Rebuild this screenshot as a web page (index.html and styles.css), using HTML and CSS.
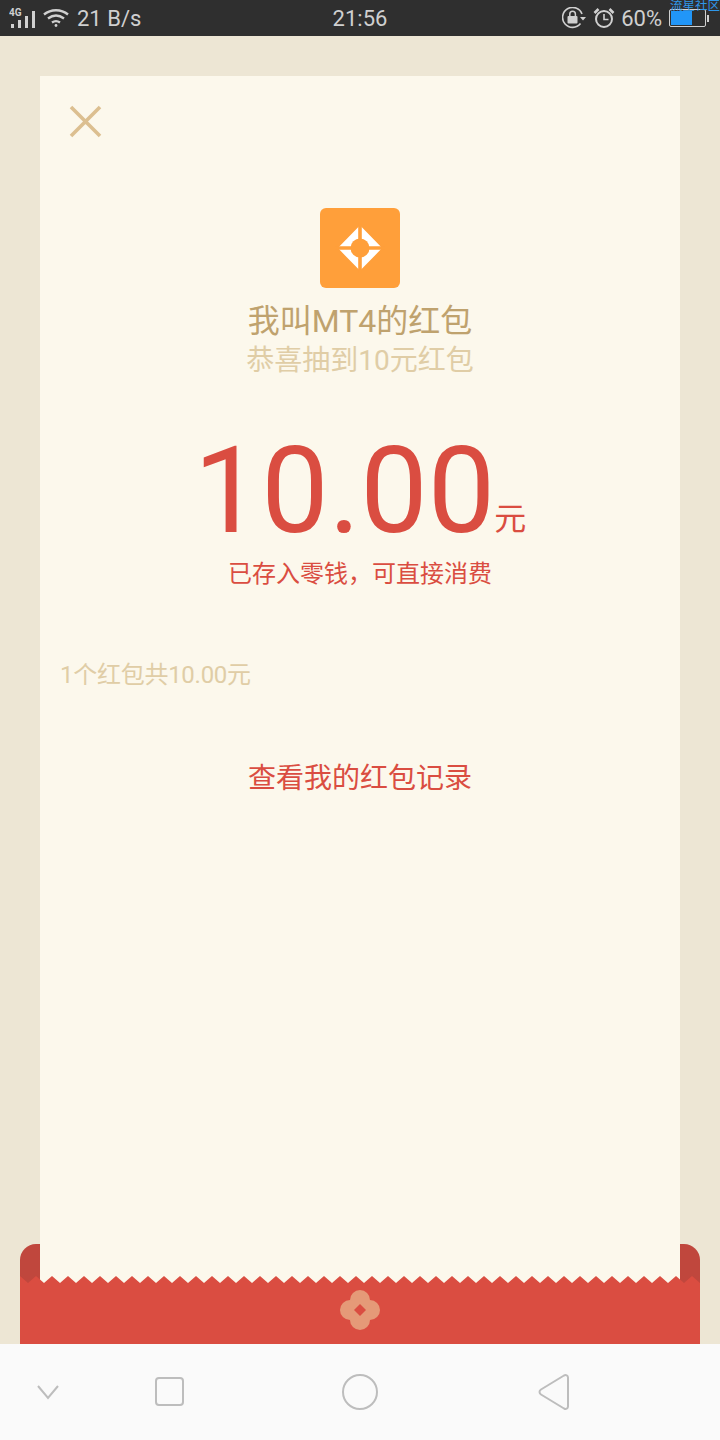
FILE: index.html
```html
<!DOCTYPE html>
<html lang="zh-CN">
<head>
<meta charset="utf-8">
<title>红包</title>
<link rel="stylesheet" href="styles.css">
</head>
<body>
<div class="screen">
  <header class="status">
    <div class="status-left">
      <svg class="ic-signal" width="28" height="24" viewBox="0 0 28 24">
        <text x="0" y="10" class="net">4G</text>
        <rect x="2" y="18" width="3" height="4" fill="#d0d0d0"/>
        <rect x="9" y="14" width="3" height="8" fill="#d0d0d0"/>
        <rect x="16" y="10" width="3" height="12" fill="#d0d0d0"/>
        <rect x="23" y="5" width="3" height="17" fill="#d0d0d0"/>
      </svg>
      <svg class="ic-wifi" width="26" height="20" viewBox="0 0 26 20" fill="none" stroke="#d0d0d0" stroke-width="2.4">
        <path d="M1 6.5C8 .8 18 .8 25 6.5"/>
        <path d="M5 10.5C10 6.8 16 6.8 21 10.5"/>
        <path d="M9 14.5C11.5 12.8 14.5 12.8 17 14.5"/>
        <circle cx="13" cy="17.5" r="1.4" fill="#d0d0d0" stroke="none"/>
      </svg>
      <span class="speed">21 B/s</span>
    </div>
    <div class="time">21:56</div>
    <div class="status-right">
      <svg class="ic-lock" width="24" height="22" viewBox="0 0 24 22" fill="none">
        <path d="M18.5 16.5A10 10 0 1 1 20 7" stroke="#d0d0d0" stroke-width="1.6"/>
        <path d="M18 10h6l-3 3.5z" fill="#d0d0d0"/>
        <rect x="5.5" y="9" width="10" height="7.5" rx="1" fill="#d0d0d0"/>
        <path d="M7.8 9V7a2.8 2.8 0 0 1 5.6 0v2" stroke="#d0d0d0" stroke-width="1.5"/>
      </svg>
      <svg class="ic-alarm" width="22" height="22" viewBox="0 0 22 22" fill="none" stroke="#d0d0d0" stroke-width="2">
        <circle cx="11" cy="12" r="8"/>
        <path d="M11 7v5.5h4.5" stroke-width="1.6"/>
        <path d="M1.5 6L5.5 2M20.5 6L16.5 2" stroke-width="2.6"/>
      </svg>
      <span class="pct">60%</span>
      <div class="battery"><div class="battery-fill"></div></div>
      <div class="battery-nub"></div>
    </div>
    <div class="watermark">流星社区</div>
  </header>

  <main class="stage">
    <section class="card">
      <svg class="close" width="36" height="36" viewBox="0 0 36 36" fill="none" stroke="#dcbf90" stroke-width="3.6">
        <path d="M3 3L32 32M32 3L3 32"/>
      </svg>
      <div class="logo">
        <svg width="80" height="80" viewBox="0 0 80 80">
          <path d="M40 19L60.5 40L40 61L19.5 40Z" fill="#fff" stroke="#fff" stroke-width="2.5" stroke-linejoin="round"/>
          <path d="M40 15V65M15 40H65" stroke="#ff9f3a" stroke-width="3.6"/>
          <circle cx="40" cy="40" r="9.5" fill="#ff9f3a"/>
        </svg>
      </div>
      <h1 class="title">我叫MT4的红包</h1>
      <p class="subtitle">恭喜抽到10元红包</p>
      <div class="amount"><span class="amount-num">10.00</span><span class="amount-unit">元</span></div>
      <p class="note">已存入零钱，可直接消费</p>
      <p class="summary">1个红包共10.00元</p>
      <p class="records">查看我的红包记录</p>
    </section>
    <div class="pocket">
      <svg class="pocket-front" width="680" height="68" viewBox="0 0 680 68">
        <polygon id="saw" fill="#da4d41" points="0,0 8,7 16,0 24,7 32,0 40,7 48,0 56,7 64,0 72,7 80,0 88,7 96,0 104,7 112,0 120,7 128,0 136,7 144,0 152,7 160,0 168,7 176,0 184,7 192,0 200,7 208,0 216,7 224,0 232,7 240,0 248,7 256,0 264,7 272,0 280,7 288,0 296,7 304,0 312,7 320,0 328,7 336,0 344,7 352,0 360,7 368,0 376,7 384,0 392,7 400,0 408,7 416,0 424,7 432,0 440,7 448,0 456,7 464,0 472,7 480,0 488,7 496,0 504,7 512,0 520,7 528,0 536,7 544,0 552,7 560,0 568,7 576,0 584,7 592,0 600,7 608,0 616,7 624,0 632,7 640,0 648,7 656,0 664,7 672,0 680,7 680,68 0,68"/>
        <g fill="#e59a78">
          <circle cx="340" cy="24" r="10"/>
          <circle cx="340" cy="44" r="10"/>
          <circle cx="330" cy="34" r="10"/>
          <circle cx="350" cy="34" r="10"/>
          <rect x="332" y="26" width="16" height="16"/>
        </g>
        <path d="M340 28L346 34L340 40L334 34Z" fill="#da4d41"/>
      </svg>
    </div>
  </main>

  <nav class="navbar">
    <svg class="nav-chevron" width="24" height="16" viewBox="0 0 24 16" fill="none" stroke="#bdbdbd" stroke-width="2">
      <path d="M2 2L12 14L22 2"/>
    </svg>
    <svg class="nav-square" width="32" height="32" viewBox="0 0 32 32" fill="none" stroke="#bdbdbd" stroke-width="2">
      <rect x="3" y="2" width="27" height="27" rx="3"/>
    </svg>
    <svg class="nav-circle" width="40" height="40" viewBox="0 0 40 40" fill="none" stroke="#bdbdbd" stroke-width="2">
      <circle cx="20" cy="20" r="17"/>
    </svg>
    <svg class="nav-back" width="36" height="40" viewBox="0 0 36 40" fill="none" stroke="#bdbdbd" stroke-width="2" stroke-linejoin="round">
      <path d="M5 17.5L28 3.5C30 2.5 32 3.5 32 5.5V34.5C32 36.5 30 37.5 28 36.5L5 22.5C3 21 3 19 5 17.5Z"/>
    </svg>
  </nav>
</div>
</body>
</html>
```
FILE: styles.css
```css
* { box-sizing: border-box; }
html, body { margin: 0; padding: 0; }
body {
  width: 720px;
  height: 1440px;
  overflow: hidden;
  font-family: Roboto, "Noto Sans CJK SC", sans-serif;
}
.screen {
  display: flex;
  flex-direction: column;
  height: 1440px;
  background: #ede6d4;
}

/* status bar */
.status {
  position: relative;
  display: grid;
  grid-template-columns: 1fr auto 1fr;
  align-items: center;
  height: 36px;
  flex: none;
  background: #2f2f2f;
  color: #d0d0d0;
  font-size: 22px;
  overflow: hidden;
}
.status-left {
  display: flex;
  align-items: center;
  padding-left: 9px;
}
.ic-wifi { margin-left: 6px; }
.speed { margin-left: 8px; }
.net { font-size: 10px; font-weight: 700; fill: #d0d0d0; font-family: Roboto, sans-serif; }
.time { text-align: center; }
.status-right {
  display: flex;
  align-items: center;
  justify-content: flex-end;
  padding-right: 11px;
}
.ic-alarm { margin-left: 7px; }
.pct { margin-left: 6px; }
.battery {
  width: 37px;
  height: 18px;
  margin-left: 7px;
  padding: 1px;
  border: 1px solid #d0d0d0;
  border-radius: 2px;
}
.battery-fill { width: 21px; height: 100%; background: #2196f8; }
.battery-nub { width: 2px; height: 7px; margin-left: 1px; background: #d0d0d0; }
.watermark {
  position: absolute;
  right: 0;
  top: 0;
  font-size: 12.5px;
  line-height: 12px;
  color: #2f97ea;
}

/* stage */
.stage {
  flex: 1;
  display: flex;
  flex-direction: column;
  padding: 40px 20px 0;
}
.card {
  position: relative;
  z-index: 1;
  height: 1208px;
  margin: 0 20px;
  flex: none;
  display: flex;
  flex-direction: column;
  background: #fcf8ec;
  text-align: center;
}
.close { margin: 28px 0 0 28px; flex: none; }
.logo {
  width: 80px;
  height: 80px;
  margin: 68px auto 0;
  border-radius: 6px;
  background: #ff9f3a;
  flex: none;
}
.logo svg { display: block; }
.title {
  margin: 13px 0 0;
  font-size: 32px;
  font-weight: 400;
  line-height: 41px;
  color: #bfa26e;
}
.subtitle {
  margin: 0;
  font-size: 28px;
  line-height: 38px;
  color: #e0cda6;
}
.amount {
  margin-top: 76px;
  text-align: center;
  color: #da4d41;
  line-height: 70px;
}
.amount-num { font-size: 120px; }
.amount-unit {
  margin-left: -1px;
  font-size: 32px;
  line-height: 30px;
  vertical-align: 2px;
}
.note {
  margin: -6px 0 0;
  font-size: 24px;
  line-height: 36px;
  color: #da4d41;
}
.summary {
  margin: 65px 0 0 20px;
  font-size: 24px;
  line-height: 36px;
  letter-spacing: -0.27px;
  text-align: left;
  color: #e0cda6;
}
.records {
  margin: 66px 0 0;
  font-size: 28px;
  line-height: 40px;
  color: #da4d41;
}

/* pocket */
.pocket {
  position: relative;
  flex: none;
  height: 100px;
  margin-top: -40px;
  border-radius: 16px 16px 0 0;
  background: #c0473d;
}
.pocket-front {
  position: absolute;
  left: 0;
  bottom: 0;
  z-index: 2;
  display: block;
}

/* nav bar */
.navbar {
  display: flex;
  align-items: center;
  flex: none;
  height: 96px;
  padding-left: 36px;
  background: #fafafa;
}
.nav-square { margin-left: 93px; }
.nav-circle { margin-left: 155px; }
.nav-back { margin-left: 156px; }
```
